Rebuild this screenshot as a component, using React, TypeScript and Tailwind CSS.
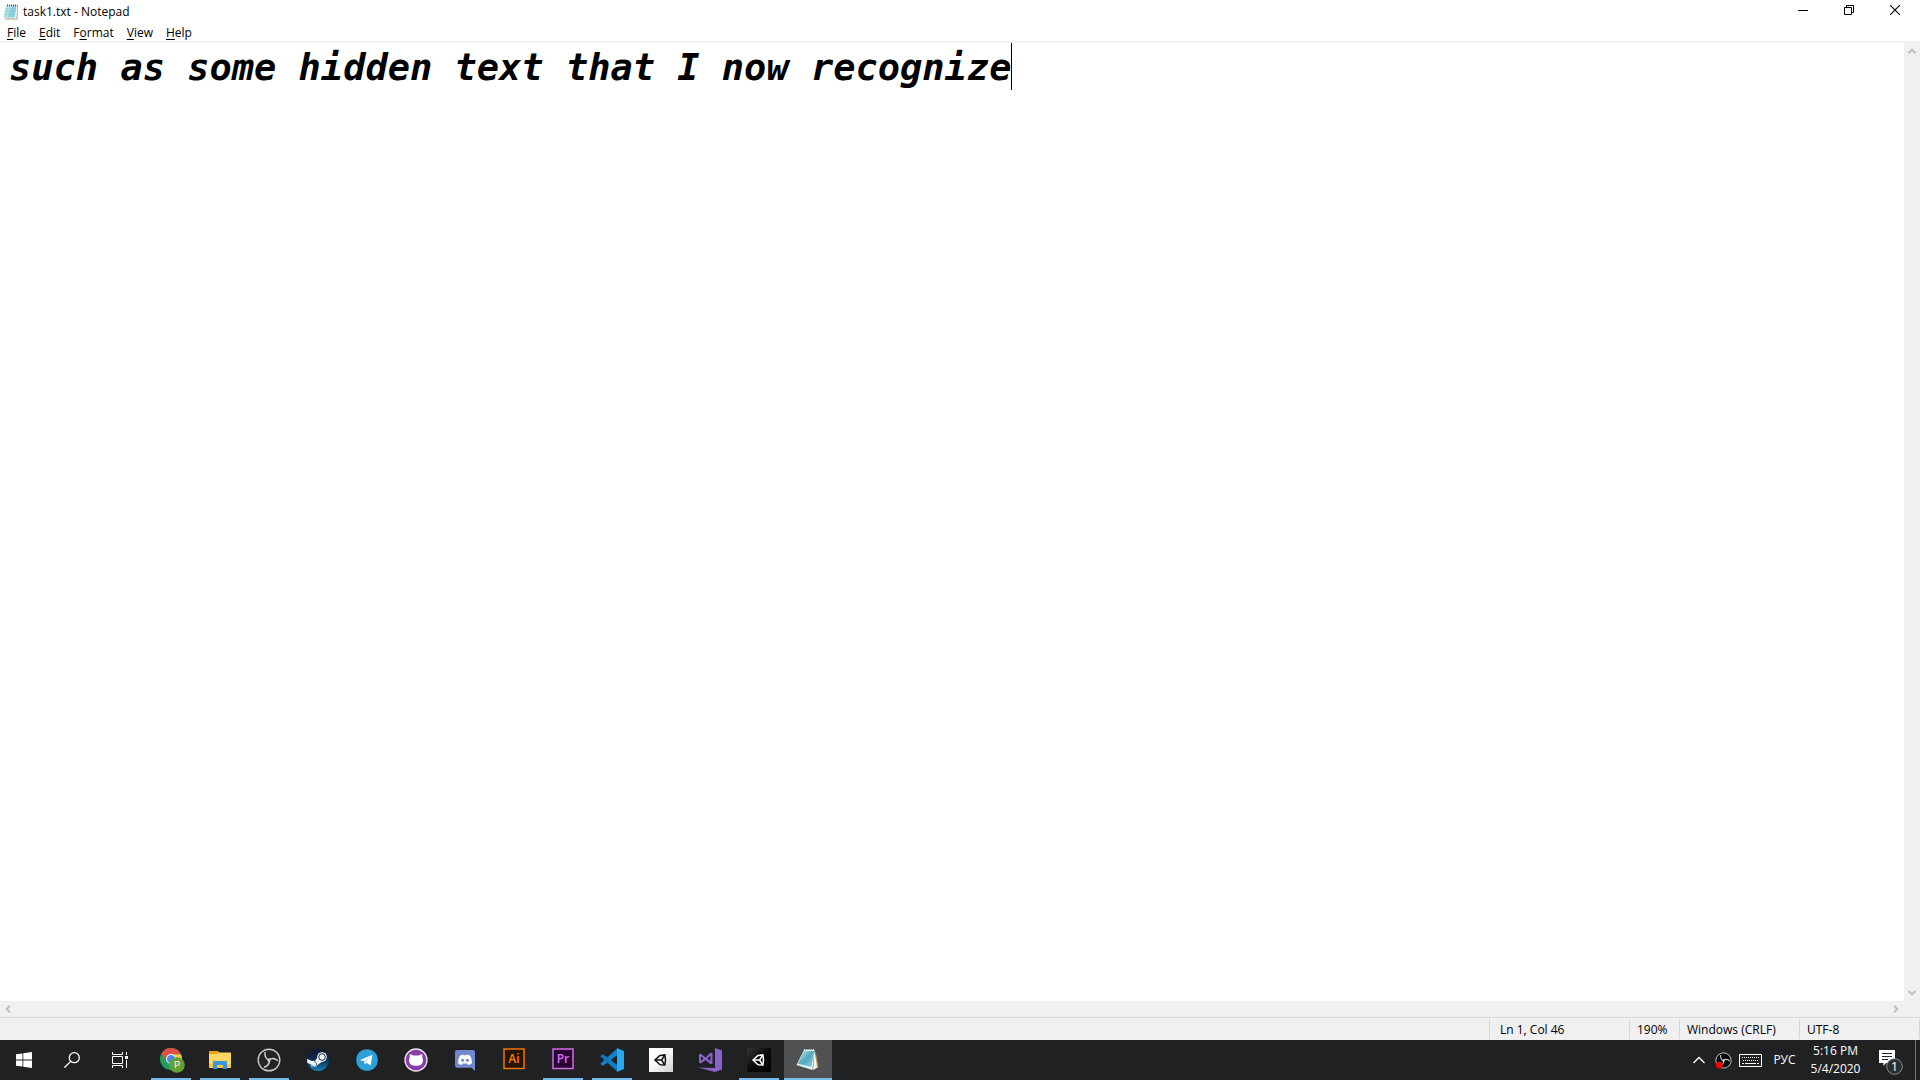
import { useState } from "react";
import type { ReactNode } from "react";

function NotepadIcon() {
  return (
    <svg width="16" height="16" viewBox="0 0 16 16" aria-hidden="true">
      <path d="M4 1.5H15L14.5 15.5H2Z" fill="#b3a27c" />
      <path d="M3.5 1.5H14.5L13.5 14.5H.5Z" fill="#e8f3f5" />
      <path d="M3.2 2H13.5L11.6 13.5H.8Z" fill="#8fd0de" />
      <path d="M3.2 2H9L5 13.5H.8Z" fill="#b5e2ea" />
      <path d="M2.6 5H13M2.2 7.5H12.6M1.8 10H12.2" stroke="#6cbccd" strokeWidth=".6" />
      <path d="M4 1.4H14.5" stroke="#46555a" strokeWidth="1.8" strokeDasharray="1 1" />
    </svg>
  );
}

function StartIcon() {
  return (
    <svg width="16" height="16" viewBox="0 0 16 16" fill="#fff" aria-hidden="true">
      <path d="M0 2.3 6.5 1.4V7.6H0ZM7.3 1.2 16 0V7.6H7.3ZM0 8.4H6.5V14.6L0 13.7ZM7.3 8.4H16V16L7.3 14.8Z" />
    </svg>
  );
}

function SearchIcon() {
  return (
    <svg width="16" height="16" viewBox="0 0 16 16" fill="none" stroke="#fff" strokeWidth="1.3" aria-hidden="true">
      <circle cx="10.3" cy="5.7" r="5" />
      <path d="M6.7 9.4.4 15.6" />
    </svg>
  );
}

function TaskViewIcon() {
  return (
    <svg width="16" height="16" viewBox="0 0 16 16" fill="none" stroke="#fff" aria-hidden="true">
      <path d="M.5 0V2.5H10.5V0M.5 16V13.5H10.5V16M.5 4.5H10.5V11.5H.5ZM14.5 0V3M14.5 8V16" />
      <path d="M13 4H16V7H13Z" fill="#fff" stroke="none" />
    </svg>
  );
}

function ChromeIcon() {
  return (
    <svg width="26" height="26" viewBox="0 0 26 26" className="ml-0.5" aria-hidden="true">
      <circle cx="12" cy="12" r="11" fill="#1e9e5a" />
      <path d="M2.5 6.5A11 11 0 0 1 22 7.5H12L7.5 14Z" fill="#df4f43" />
      <path d="M12 7.5H22A11 11 0 0 1 12 23L16.5 14Z" fill="#fbc83f" />
      <circle cx="12" cy="12" r="5" fill="#fff" />
      <circle cx="12" cy="12" r="4" fill="#4a8af4" />
      <circle cx="18" cy="18" r="7.8" fill="#649f38" />
      <text x="18" y="21.2" textAnchor="middle" fill="#fff" fontSize="9" fontFamily="Roboto, sans-serif">P</text>
    </svg>
  );
}

function ExplorerIcon() {
  return (
    <svg width="22" height="20" viewBox="0 0 22 20" aria-hidden="true">
      <path d="M0 1H9L10.5 3H22V18H0Z" fill="#e5a50f" />
      <path d="M0 4H8L9.5 2.5H22V18H0Z" fill="#ffd563" />
      <path d="M0 14H22V18H0Z" fill="#f5c548" />
      <path d="M4 19V12Q4 11 5 11H17Q18 11 18 12V19H14V15H8V19Z" fill="#3b97dc" />
    </svg>
  );
}

function ObsIcon({ size, dot }: { size: number; dot?: boolean }) {
  const blade = "M12 12.3C9.5 11.2 7.3 8.6 8.2 4";
  return (
    <svg width={size} height={size} viewBox="0 0 24 24" fill="none" aria-hidden="true">
      <circle cx="12" cy="12" r="10.8" fill={dot ? "#050505" : "#242326"} stroke="#c8c8c8" strokeWidth="1.4" />
      <g stroke="#d0d0d0" strokeWidth="1.5">
        <path d={blade} />
        <path d={blade} transform="rotate(120 12 12)" />
        <path d={blade} transform="rotate(240 12 12)" />
      </g>
      <circle cx="12" cy="12" r="1.7" fill="#d0d0d0" />
      {dot && <circle cx="6" cy="18.5" r="4.8" fill="#f00" />}
    </svg>
  );
}

function SteamIcon() {
  return (
    <svg width="24" height="24" viewBox="0 0 24 24" aria-hidden="true">
      <defs>
        <linearGradient id="steam" x1="0" y1="0" x2="0" y2="1">
          <stop offset="0" stopColor="#11152f" />
          <stop offset=".5" stopColor="#0c2c58" />
          <stop offset="1" stopColor="#1784bd" />
        </linearGradient>
      </defs>
      <circle cx="12" cy="12" r="11" fill="url(#steam)" />
      <path d="M1 11 8.5 14 12 8.5 17 13 10 18 1.4 15Z" fill="#f2f4f6" />
      <circle cx="16" cy="9" r="4.8" fill="#f2f4f6" />
      <circle cx="16" cy="9" r="3.3" fill="#f2f4f6" stroke="#12284e" strokeWidth="1" />
      <circle cx="8" cy="16" r="3.3" fill="#f2f4f6" />
      <path d="M5.5 16.8A2.6 2.6 0 1 0 8 13.6" fill="none" stroke="#155286" strokeWidth=".8" />
    </svg>
  );
}

function TelegramIcon() {
  return (
    <svg width="22" height="22" viewBox="0 0 22 22" aria-hidden="true">
      <circle cx="11" cy="11" r="10.8" fill="#2ba0dc" />
      <path d="M4 11 16.5 5.8 14.6 16.4 10.5 13.7 8.6 15.6 8 12.3Z" fill="#fff" />
      <path d="M8 12.3 14.6 7.6 9.4 13.1 8.6 15.6Z" fill="#b8d9ec" />
    </svg>
  );
}

function GithubDesktopIcon() {
  return (
    <svg width="24" height="24" viewBox="0 0 24 24" aria-hidden="true">
      <circle cx="12" cy="12" r="11" fill="#8a3da6" stroke="#eee3f1" strokeWidth="1.3" />
      <path d="M6 6.2C7 6 8.6 6.9 9.6 7.6Q12 7.2 14.4 7.6C15.4 6.9 17 6 18 6.2Q18.7 8 18.2 9.5C19.5 11.5 19 14 18 15.8Q16.6 17.8 12 17.8T6 15.8C5 14 4.5 11.5 5.8 9.5Q5.3 8 6 6.2Z" fill="#fff" />
    </svg>
  );
}

function DiscordIcon() {
  return (
    <svg width="20" height="22" viewBox="0 0 20 22" aria-hidden="true">
      <path d="M2 1H18Q20 1 20 3V22L16.5 18.8H2Q0 18.8 0 16.8V3Q0 1 2 1Z" fill="#7188cf" />
      <path d="M5 6.5 8 5.5 8.6 6.3H11.4L12 5.5 15 6.5Q17.3 10 17 14.2 15.3 15.6 13 15.9L12.3 14.6H7.7L7 15.9Q4.7 15.6 3 14.2 2.7 10 5 6.5Z" fill="#fff" />
      <circle cx="7.6" cy="11.2" r="1.5" fill="#7188cf" />
      <circle cx="12.4" cy="11.2" r="1.5" fill="#7188cf" />
    </svg>
  );
}

function AdobeIcon({ label, color, fill }: { label: string; color: string; fill: string }) {
  return (
    <svg width="22" height="24" viewBox="0 0 22 24" aria-hidden="true">
      <rect x="1" y="1" width="20" height="19.5" fill={fill} stroke={color} strokeWidth="1.4" />
      <text x="11" y="15" textAnchor="middle" fill={color} fontSize="12" fontWeight="600" fontFamily="Open Sans, sans-serif">
        {label}
      </text>
    </svg>
  );
}

function VsCodeIcon() {
  return (
    <svg width="24" height="24" viewBox="0 0 24 24" aria-hidden="true">
      <path d="M17.5 .2 .3 15.7 2.2 17.6Q2.8 18 3.4 17.6L18 6.6Z" fill="#1283cb" />
      <path d="M17.5 23.8 .3 8.3 2.2 6.4Q2.8 6 3.4 6.4L18 17.4Z" fill="#0f79bd" />
      <path d="M17 0 24 3V21L17 24Z" fill="#28a9f0" />
    </svg>
  );
}

function UnityIcon({ dark }: { dark?: boolean }) {
  const ink = dark ? "#fff" : "#111";
  const id = dark ? "unity-dark" : "unity-light";
  return (
    <svg width="24" height="24" viewBox="0 0 24 24" aria-hidden="true">
      <defs>
        <linearGradient id={id} x1="0" y1="0" x2="1" y2="1">
          <stop offset="0" stopColor={dark ? "#363636" : "#ffffff"} />
          <stop offset=".5" stopColor={dark ? "#0a0a0a" : "#f6f6f6"} />
          <stop offset="1" stopColor={dark ? "#000000" : "#cfcfcf"} />
        </linearGradient>
      </defs>
      <rect width="24" height="24" fill={"url(#" + id + ")"} />
      <g fill="none" stroke={ink} strokeWidth="1.5">
        <path d="M11 7.4 6 12 11 16.8M11 7.4 15.9 6.9 16.5 12 15.9 17 11 16.8" />
        <path d="M12.6 12H7M12.6 12 15.6 7.3M12.6 12 15.6 16.8" />
      </g>
    </svg>
  );
}

function VisualStudioIcon() {
  return (
    <svg width="24" height="24" viewBox="0 0 24 24" aria-hidden="true">
      <path d="M17 0 24 2.5V21.5L17 24 0 19.5 17 20Z" fill="#8b62cb" />
      <path d="M1 6.2 2.6 5.6 7.6 9.4 12.5 4.6 14.5 5.5V15.4L12.5 16.3 7.6 11.9 2.6 15.5 1 14.8ZM2.9 8.2V12.8L5.6 10.5ZM12.4 7.7 9.2 10.6 12.4 13.2Z" fill="#8b62cb" fillRule="evenodd" />
    </svg>
  );
}

function NotepadLargeIcon() {
  return (
    <svg width="24" height="24" viewBox="0 0 24 24" aria-hidden="true">
      <defs>
        <linearGradient id="pad" x1="0" y1="0" x2="1" y2="1">
          <stop offset="0" stopColor="#cfeef4" />
          <stop offset=".5" stopColor="#4fa9bd" />
          <stop offset="1" stopColor="#8ed3df" />
        </linearGradient>
      </defs>
      <path d="M19.5 3 22.5 19 18 22Z" fill="#c39a55" />
      <path d="M18.5 2 21 19.5 17 22Z" fill="#f0f4f5" />
      <path d="M8 2H18.5L16.5 22 .5 17Z" fill="#e6f6f8" />
      <path d="M8 3H18L15.5 19 1.8 15.8Z" fill="url(#pad)" />
      <path d="M8 1.8H18.5" stroke="#d8e4e6" strokeWidth="1.6" strokeDasharray="1 .8" />
    </svg>
  );
}

const icons: { name: string; icon: ReactNode; open?: boolean; active?: boolean }[] = [
  { name: "Google Chrome", icon: <ChromeIcon />, open: true },
  { name: "File Explorer", icon: <ExplorerIcon />, open: true },
  { name: "OBS Studio", icon: <ObsIcon size={24} />, open: true },
  { name: "Steam", icon: <SteamIcon /> },
  { name: "Telegram", icon: <TelegramIcon /> },
  { name: "GitHub Desktop", icon: <GithubDesktopIcon /> },
  { name: "Discord", icon: <DiscordIcon /> },
  { name: "Illustrator", icon: <AdobeIcon label="Ai" color="#ff7c00" fill="#261300" /> },
  { name: "Premiere Pro", icon: <AdobeIcon label="Pr" color="#e070f5" fill="#2a0033" />, open: true },
  { name: "Visual Studio Code", icon: <VsCodeIcon />, open: true },
  { name: "Unity Hub", icon: <UnityIcon /> },
  { name: "Visual Studio", icon: <VisualStudioIcon /> },
  { name: "Unity", icon: <UnityIcon dark />, open: true },
  { name: "Notepad", icon: <NotepadLargeIcon />, open: true, active: true },
];

function ScrollArrow({ label, d }: { label: string; d: string }) {
  return (
    <button aria-label={label} className="flex size-4 items-center justify-center">
      <svg width="8" height="8" viewBox="0 0 8 8" fill="none" stroke="#bfbfbf" strokeWidth="2" aria-hidden="true">
        <path d={d} />
      </svg>
    </button>
  );
}

const menus = [
  ["", "F", "ile"],
  ["", "E", "dit"],
  ["F", "o", "rmat"],
  ["", "V", "iew"],
  ["", "H", "elp"],
];

function TitleBar() {
  return (
    <header className="flex h-[23px] items-center justify-between pl-[3px]">
      <div className="flex items-center gap-1">
        <NotepadIcon />
        <h1>task1.txt - Notepad</h1>
      </div>
      <div className="flex self-start pr-0.5">
        <button aria-label="Minimize" className="flex h-5 w-[46px] items-center justify-center">
          <svg width="10" height="10" viewBox="0 0 10 10" stroke="#000" aria-hidden="true">
            <path d="M0 5.5H10" />
          </svg>
        </button>
        <button aria-label="Restore" className="flex h-5 w-[46px] items-center justify-center">
          <svg width="10" height="10" viewBox="0 0 10 10" fill="none" stroke="#000" aria-hidden="true">
            <path d="M.5 2.5H7.5V9.5H.5ZM2.5 2.5V.5H9.5V7.5H7.5" />
          </svg>
        </button>
        <button aria-label="Close" className="flex h-5 w-[46px] items-center justify-center">
          <svg width="10" height="10" viewBox="0 0 10 10" stroke="#000" strokeWidth="1.1" aria-hidden="true">
            <path d="M0 0 10 10M10 0 0 10" />
          </svg>
        </button>
      </div>
    </header>
  );
}

function Taskbar() {
  return (
    <footer className="flex h-10 shrink-0 bg-[#202123] text-white">
      <button aria-label="Start" className="flex w-12 items-center justify-center"><StartIcon /></button>
      <button aria-label="Search" className="flex w-12 items-center justify-center"><SearchIcon /></button>
      <button aria-label="Task View" className="flex w-12 items-center justify-center"><TaskViewIcon /></button>
      <nav aria-label="Applications" className="ml-[3px] flex gap-px">
        {icons.map((a) => (
          <button key={a.name} aria-label={a.name} className={"flex w-12 flex-col items-center " + (a.active ? "bg-[#505152]" : "")}>
            <span className="flex w-full flex-1 items-center justify-center pt-0.5">{a.icon}</span>
            <span className={"h-0.5 " + (a.active ? "w-12 " : "w-10 ") + (a.open ? "bg-[#76b9ed]" : "")} />
          </button>
        ))}
      </nav>
      <div className="ml-auto flex items-center">
        <button aria-label="Show hidden icons" className="flex w-6 justify-center">
          <svg width="12" height="8" viewBox="0 0 12 8" fill="none" stroke="#fff" strokeWidth="1.3" aria-hidden="true">
            <path d="M.5 7 6 1.5 11.5 7" />
          </svg>
        </button>
        <button aria-label="OBS" className="flex w-6 justify-center"><ObsIcon size={17} dot /></button>
        <button aria-label="Touch keyboard" className="flex w-[31px] justify-center">
          <svg width="23" height="13" viewBox="0 0 23 13" fill="none" stroke="#fff" aria-hidden="true">
            <path d="M.5 .5H22.5V12.5H.5Z" />
            <path d="M3 3.5H20M4 6.5H20" strokeDasharray="1 1" />
            <path d="M3 9.5H5M6 9.5H17M18 9.5H20" />
          </svg>
        </button>
        <button className="w-[37px] text-center">РУС</button>
        <button className="flex w-[65px] flex-col items-center leading-[18px]">
          <span>5:16 PM</span>
          <span>5/4/2020</span>
        </button>
        <button aria-label="1 new notification" className="flex w-[47px] justify-center pt-1 pr-1">
          <svg width="26" height="26" viewBox="0 0 26 26" aria-hidden="true">
            <path d="M2 1H18V14H9L6.5 17V14H2Z" fill="#fff" />
            <path d="M5 4.5H15M5 7.5H15M5 10.5H11" stroke="#202123" />
            <circle cx="17.5" cy="17.5" r="7.8" fill="#2c2d2f" stroke="#8c8c8c" />
            <text x="17.5" y="22" textAnchor="middle" fill="#fff" fontSize="13" fontFamily="Open Sans, sans-serif">1</text>
          </svg>
        </button>
        <button aria-label="Show desktop" className="h-10 w-[5px] border-l border-[#77787a]" />
      </div>
    </footer>
  );
}

export default function App() {
  const [text, setText] = useState("such as some hidden text that I now recognize");
  return (
    <div className="flex h-screen flex-col bg-white font-['Open_Sans',sans-serif] text-[12px] leading-4 text-black">
      <TitleBar />
      <nav aria-label="Menu" className="flex h-5 items-end gap-[13px] border-b-2 border-[#f0f0f0] pl-[7px]">
        {menus.map(([a, key, b]) => (
          <button key={key}>
            {a}
            <span className="underline underline-offset-2">{key}</span>
            {b}
          </button>
        ))}
      </nav>
      <main className="flex min-h-0 flex-1">
        <div className="flex min-w-0 flex-1 items-start pl-[9px]">
          <textarea
            aria-label="Document text"
            spellCheck={false}
            value={text}
            onChange={(e) => setText(e.target.value)}
            className="field-sizing-content h-[47px] resize-none overflow-hidden font-['DejaVu_Sans_Mono',monospace] text-[37px] leading-[49px] font-bold whitespace-pre italic outline-none"
          />
          <span className="h-[47px] w-px shrink-0 bg-black" />
        </div>
        <div className="flex w-4 flex-col justify-between bg-[#f0f0f0]">
          <ScrollArrow label="Scroll up" d="M.7 6 4 2.7 7.3 6" />
          <ScrollArrow label="Scroll down" d="M.7 2 4 5.3 7.3 2" />
        </div>
      </main>
      <div className="flex h-4 justify-between bg-[#f0f0f0] pr-4">
        <ScrollArrow label="Scroll left" d="M6 .7 2.7 4 6 7.3" />
        <ScrollArrow label="Scroll right" d="M2 .7 5.3 4 2 7.3" />
      </div>
      <div role="status" className="flex h-[23px] justify-end border-t border-[#d7d7d7] bg-[#f0f0f0] py-px leading-[22px]">
        <span className="w-[140px] border-l border-[#d7d7d7] pl-[10px]">Ln 1, Col 46</span>
        <span className="w-[50px] border-l border-[#d7d7d7] pl-[7px]">190%</span>
        <span className="w-[120px] border-l border-[#d7d7d7] pl-[7px]">Windows (CRLF)</span>
        <span className="w-[121px] border-x border-[#d7d7d7] pl-[7px]">UTF-8</span>
      </div>
      <Taskbar />
    </div>
  );
}
